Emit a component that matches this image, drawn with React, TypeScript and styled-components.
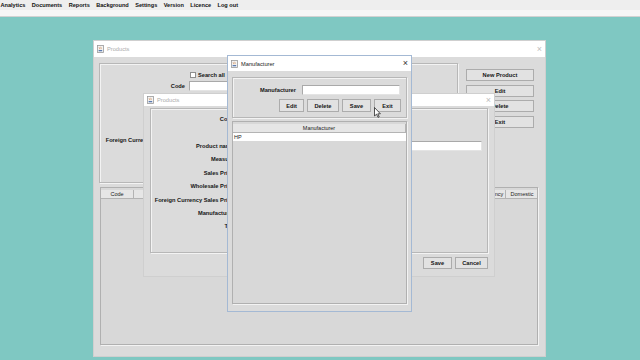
import React from "react";
import styled, { createGlobalStyle } from "styled-components";

const GlobalStyle = createGlobalStyle`
  html, body {
    margin: 0;
    padding: 0;
    background: #7fc8c2;
  }
  body {
    font-family: "Liberation Sans", Arial, sans-serif;
  }
`;

const menuItems = ["Analytics", "Documents", "Reports", "Background", "Settings", "Version", "Licence", "Log out"];

const mainColumns = [
  { title: "Code", w: 33 },
  { title: "Product name", w: 90 },
  { title: "Measure", w: 60 },
  { title: "Sales Price", w: 60 },
  { title: "Wholesale Price", w: 60 },
  { title: "Manufacturer", w: 55 },
  { title: "Foreign Currency", w: 47 },
  { title: "Domestic", w: 33 },
];

const searchFields = [
  { label: "Code", w: 130 },
  { label: "", w: 200 },
  { label: "", w: 130 },
  { label: "", w: 130 },
  { label: "Foreign Currency Sales Price", w: 130 },
];

const productFields = [
  { label: "Code", w: 120 },
  { label: "", w: 0 },
  { label: "Product name", w: 244 },
  { label: "Measure", w: 120 },
  { label: "Sales Price", w: 120 },
  { label: "Wholesale Price", w: 120 },
  { label: "Foreign Currency Sales Price", w: 120 },
  { label: "Manufacturer", w: 120 },
  { label: "Tax", w: 120 },
];

const CupIcon = () => (
  <svg width="7" height="8" viewBox="0 0 7 8">
    <rect x="0.5" y="0.5" width="6" height="7" fill="#f4f4f4" stroke="#9a9a9a" strokeWidth="0.8" />
    <path d="M2 2.2 Q3 3.2 2.4 4.2 M3.6 1.8 Q4.6 3 4 4.2" stroke="#c87a3a" strokeWidth="0.6" fill="none" />
    <path d="M1.6 5 H5.2 V6.3 H1.6 Z" fill="#5a7bb0" />
  </svg>
);

const Pointer = () => (
  <CursorLayer>
    <svg width="7" height="11" viewBox="0 0 7 11">
      <path d="M0.5 0.5 L0.5 9 L2.6 7.2 L4 10.3 L5.2 9.8 L3.8 6.8 L6.4 6.8 Z" fill="#fff" stroke="#111" strokeWidth="0.7" />
    </svg>
  </CursorLayer>
);

type WindowProps = {
  title: string;
  x: number;
  y: number;
  w: number;
  h: number;
  bar: number;
  active?: boolean;
  children: React.ReactNode;
};

const InternalWindow = ({ title, x, y, w, h, bar, active, children }: WindowProps) => (
  <Frame $x={x} $y={y} $w={w} $h={h} $active={active}>
    <TitleBar $h={bar} $active={active}>
      <CupIcon />
      <TitleText>{title}</TitleText>
      <CloseMark $active={active}>×</CloseMark>
    </TitleBar>
    {children}
  </Frame>
);

export default function App() {
  return (
    <Screen>
      <GlobalStyle />
      <MenuBar>
        {menuItems.map((m) => (
          <MenuItem key={m}>{m}</MenuItem>
        ))}
      </MenuBar>
      <ToolStrip />
      <Desktop>
        <InternalWindow title="Products" x={93} y={23} w={453} h={317} bar={16}>
          <MainBody>
            <TopRow>
              <EtchedPanel $w={359} $h={120}>
                <FormGrid $label={85} $top={7} $rows="8px repeat(5, 13.5px)">
                  <span />
                  <CheckRow>
                    <CheckBox />
                    Search all
                  </CheckRow>
                  {searchFields.map((f, i) => (
                    <React.Fragment key={i}>
                      <Label>{f.label}</Label>
                      <Field $w={f.w} />
                    </React.Fragment>
                  ))}
                </FormGrid>
              </EtchedPanel>
              <ButtonColumn>
                <Button $w={68} $h={12}>New Product</Button>
                <Button $w={68} $h={12}>Edit</Button>
                <Button $w={68} $h={12}>Delete</Button>
                <Button $w={68} $h={12}>Exit</Button>
              </ButtonColumn>
            </TopRow>
            <TablePanel $w={438} $h={158} $left={1}>
              <HeaderRow>
                {mainColumns.map((c) => (
                  <HeaderCell key={c.title} $w={c.w}>
                    {c.title}
                  </HeaderCell>
                ))}
              </HeaderRow>
            </TablePanel>
          </MainBody>
        </InternalWindow>

        <InternalWindow title="Products" x={143} y={76} w={352} h={184} bar={12}>
          <ProductBody>
            <EtchedPanel $h={145}>
              <FormGrid $label={83} $top={3.5} $rows="repeat(9, 13.4px)">
                {productFields.map((f, i) => (
                  <React.Fragment key={i}>
                    <Label>{f.label}</Label>
                    {f.w > 0 ? <Field $w={f.w} /> : <span />}
                  </React.Fragment>
                ))}
              </FormGrid>
            </EtchedPanel>
            <ButtonRow $end>
              <Button $w={29} $h={12}>Save</Button>
              <Button $w={33} $h={12}>Cancel</Button>
            </ButtonRow>
          </ProductBody>
        </InternalWindow>

        <InternalWindow title="Manufacturer" x={227} y={38} w={185} h={257} bar={15} active>
          <ManufacturerBody>
            <EtchedPanel $h={41}>
              <ManufacturerForm>
                <InputRow>
                  <Label $w={63}>Manufacturer</Label>
                  <Field $w={98} />
                </InputRow>
                <ButtonRow>
                  <Button $w={25} $h={13}>Edit</Button>
                  <Button $w={32} $h={13}>Delete</Button>
                  <Button $w={29} $h={13}>Save</Button>
                  <Button $w={27} $h={13}>Exit</Button>
                </ButtonRow>
              </ManufacturerForm>
            </EtchedPanel>
            <TablePanel $h={183}>
              <HeaderRow>
                <HeaderCell $w={173}>Manufacturer</HeaderCell>
              </HeaderRow>
              <DataRow>HP</DataRow>
            </TablePanel>
          </ManufacturerBody>
        </InternalWindow>

        <Pointer />
      </Desktop>
    </Screen>
  );
}

const Screen = styled.div`
  width: 640px;
  height: 360px;
  display: flex;
  flex-direction: column;
  overflow: hidden;
  font-size: 5.7px;
  color: #151515;
`;

const MenuBar = styled.nav`
  height: 10px;
  background: #eeeeee;
  display: flex;
  align-items: center;
  gap: 6.4px;
  padding-left: 0.5px;
`;

const MenuItem = styled.span`
  font-weight: bold;
  font-size: 5.6px;
  color: #111;
  white-space: nowrap;
`;

const ToolStrip = styled.div`
  height: 6px;
  background: #f6f6f6;
  border-bottom: 1px solid #d2d2d2;
`;

const Desktop = styled.div`
  flex: 1;
  position: relative;
  background: #7fc8c2;
`;

const Frame = styled.div<{ $x: number; $y: number; $w: number; $h: number; $active?: boolean }>`
  position: absolute;
  left: ${(p) => p.$x}px;
  top: ${(p) => p.$y}px;
  width: ${(p) => p.$w}px;
  height: ${(p) => p.$h}px;
  box-sizing: border-box;
  display: flex;
  flex-direction: column;
  background: #dbdbdb;
  border: 1px solid ${(p) => (p.$active ? "#a4b9d4" : "#cfcfcf")};
`;

const TitleBar = styled.div<{ $h: number; $active?: boolean }>`
  height: ${(p) => p.$h}px;
  flex-shrink: 0;
  background: #ffffff;
  display: flex;
  align-items: center;
  gap: 3px;
  padding: 0 3px;
  color: ${(p) => (p.$active ? "#222" : "#ababab")};
  font-size: 5.7px;
`;

const TitleText = styled.span`
  white-space: nowrap;
`;

const CloseMark = styled.span<{ $active?: boolean }>`
  margin-left: auto;
  font-size: 9px;
  line-height: 1;
  color: ${(p) => (p.$active ? "#333" : "#bdbdbd")};
`;

const MainBody = styled.div`
  flex: 1;
  display: flex;
  flex-direction: column;
  gap: 4px;
  padding: 6px 7px 0 5px;
`;

const TopRow = styled.div`
  display: flex;
  gap: 8px;
  align-items: flex-start;
`;

const EtchedPanel = styled.div<{ $w?: number; $h?: number }>`
  box-sizing: border-box;
  width: ${(p) => (p.$w ? `${p.$w}px` : "auto")};
  height: ${(p) => (p.$h ? `${p.$h}px` : "auto")};
  flex-shrink: 0;
  border: 1px solid #b7b7b7;
  box-shadow: inset 1px 1px 0 #f3f3f3, 1px 1px 0 #f3f3f3;
  overflow: hidden;
`;

const FormGrid = styled.div<{ $label: number; $top: number; $rows: string }>`
  display: grid;
  grid-template-columns: ${(p) => p.$label}px 1fr;
  grid-template-rows: ${(p) => p.$rows};
  column-gap: 4px;
  align-items: center;
  padding-top: ${(p) => p.$top}px;
`;

const Label = styled.span<{ $w?: number }>`
  font-weight: bold;
  text-align: right;
  white-space: nowrap;
  color: #151515;
  ${(p) => (p.$w ? `width: ${p.$w}px; flex-shrink: 0;` : "")}
`;

const Field = styled.div<{ $w: number }>`
  box-sizing: border-box;
  width: ${(p) => p.$w}px;
  height: 10px;
  background: #ffffff;
  border: 1px solid #a9a9a9;
  border-right-color: #e4e4e4;
  border-bottom-color: #e4e4e4;
`;

const CheckRow = styled.div`
  display: flex;
  align-items: center;
  gap: 2px;
  font-weight: bold;
  white-space: nowrap;
  padding-left: 1px;
`;

const CheckBox = styled.div`
  box-sizing: border-box;
  width: 6px;
  height: 6px;
  background: #fff;
  border: 1px solid #8e8e8e;
`;

const ButtonColumn = styled.div`
  display: flex;
  flex-direction: column;
  gap: 3.6px;
  padding-top: 6px;
`;

const Button = styled.div<{ $w: number; $h: number }>`
  box-sizing: border-box;
  width: ${(p) => p.$w}px;
  height: ${(p) => p.$h}px;
  display: flex;
  align-items: center;
  justify-content: center;
  background: #e2e2e2;
  border: 1px solid #acacac;
  font-weight: bold;
  font-size: 5.7px;
  color: #151515;
  white-space: nowrap;
`;

const ButtonRow = styled.div<{ $end?: boolean }>`
  display: flex;
  gap: 3px;
  justify-content: ${(p) => (p.$end ? "flex-end" : "flex-start")};
`;

const TablePanel = styled.div<{ $w?: number; $h: number; $left?: number }>`
  box-sizing: border-box;
  width: ${(p) => (p.$w ? `${p.$w}px` : "auto")};
  height: ${(p) => p.$h}px;
  margin-left: ${(p) => p.$left ?? 0}px;
  flex-shrink: 0;
  border: 1px solid #b0b0b0;
  box-shadow: 1px 1px 0 #f3f3f3;
  background: #d8d8d8;
  display: flex;
  flex-direction: column;
  overflow: hidden;
`;

const HeaderRow = styled.div`
  display: flex;
  height: 8px;
  flex-shrink: 0;
  margin-top: 2px;
  background: #e6e6e6;
  border-bottom: 1px solid #b4b4b4;
`;

const HeaderCell = styled.div<{ $w: number }>`
  box-sizing: border-box;
  width: ${(p) => p.$w}px;
  flex-shrink: 0;
  display: flex;
  align-items: center;
  justify-content: center;
  border-right: 1px solid #b4b4b4;
  white-space: nowrap;
  overflow: hidden;
  font-size: 5.5px;
  color: #222;
`;

const DataRow = styled.div`
  height: 8px;
  background: #ffffff;
  display: flex;
  align-items: center;
  padding-left: 1px;
  font-size: 5.5px;
  color: #222;
`;

const ProductBody = styled.div`
  flex: 1;
  display: flex;
  flex-direction: column;
  gap: 4px;
  padding: 2px 6px 0 6px;
`;

const ManufacturerBody = styled.div`
  flex: 1;
  display: flex;
  flex-direction: column;
  gap: 3px;
  padding: 6px 4px 0 4px;
`;

const ManufacturerForm = styled.div`
  display: flex;
  flex-direction: column;
  gap: 4px;
  padding: 7px 0 0 0;
  ${ButtonRow} {
    padding-left: 46px;
  }
`;

const InputRow = styled.div`
  display: flex;
  align-items: center;
  gap: 6px;
`;

const CursorLayer = styled.div`
  position: absolute;
  left: 374px;
  top: 90px;
  width: 7px;
  height: 11px;
  display: flex;
`;
